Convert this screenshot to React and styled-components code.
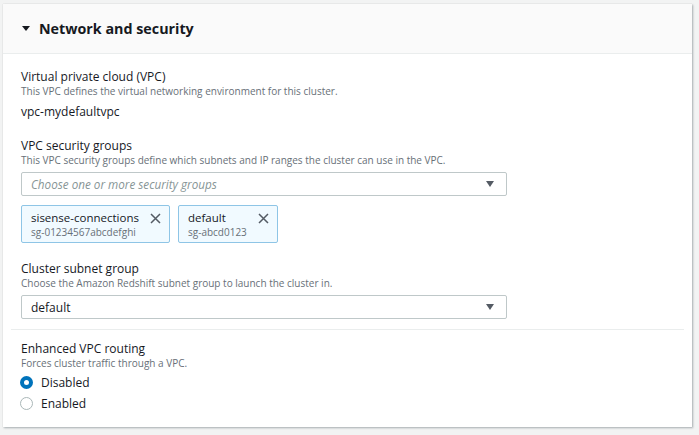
import React from "react";
import styled, { createGlobalStyle } from "styled-components";

const GlobalStyle = createGlobalStyle`
  html, body {
    margin: 0;
    padding: 0;
    background: #f2f3f3;
    font-family: "Open Sans", "Noto Sans", sans-serif;
    color: #16191f;
  }
  * { box-sizing: border-box; }
`;

const Page = styled.div`
  padding: 4px 7px 7px 3px;
`;

const Card = styled.section`
  background: #ffffff;
  box-shadow: 1px 1px 2px rgba(0, 28, 36, 0.3), 0 0 1px rgba(0, 28, 36, 0.15);
`;

const Header = styled.header`
  height: 50px;
  display: flex;
  align-items: center;
  gap: 9px;
  padding-left: 19px;
  background: #fafafa;
  border-bottom: 1px solid #eaeded;
`;

const HeaderTitle = styled.h2`
  margin: 0;
  font-size: 14.3px;
  font-weight: 700;
  line-height: 20px;
  color: #16191f;
`;

const Body = styled.div`
  padding: 15px 8px 13px 8px;
`;

const Section = styled.div`
  padding: 0 10px;
`;

const Field = styled.div`
  margin-top: ${(p) => p.$top || 0}px;
`;

const Label = styled.div`
  font-size: 12px;
  line-height: 16px;
  color: #16191f;
`;

const Description = styled.div`
  font-size: 10px;
  line-height: 12px;
  color: #687078;
`;

const Value = styled.div`
  margin-top: 7px;
  font-size: 12px;
  line-height: 16px;
  color: #16191f;
`;

const Select = styled.div`
  margin-top: 6px;
  width: 486px;
  height: 24px;
  display: flex;
  align-items: center;
  justify-content: space-between;
  padding: 0 12px 0 9px;
  border: 1px solid #bfc8c9;
  border-radius: 2px;
  background: #fff;
`;

const SelectText = styled.span`
  font-size: ${(p) => (p.$placeholder ? "11.7px" : "12px")};
  font-style: ${(p) => (p.$placeholder ? "italic" : "normal")};
  color: ${(p) => (p.$placeholder ? "#879596" : "#16191f")};
`;

const ChipList = styled.div`
  margin-top: 9px;
  display: flex;
  gap: 8px;
`;

const Chip = styled.div`
  height: 38px;
  display: flex;
  align-items: flex-start;
  gap: 11px;
  padding: 4px 8px 4px 9px;
  background: #f1faff;
  border: 1px solid #8ec5e6;
  border-radius: 2px;
`;

const ChipText = styled.div`
  display: flex;
  flex-direction: column;
`;

const ChipTitle = styled.span`
  font-size: 11.5px;
  line-height: 16px;
  color: #16191f;
`;

const ChipSub = styled.span`
  font-size: 10px;
  line-height: 12px;
  color: #687078;
`;

const ChipClose = styled.span`
  display: flex;
  margin-top: 3px;
`;

const Divider = styled.hr`
  margin: 10px 0 0 0;
  border: 0;
  height: 1px;
  background: #eaeded;
`;

const RadioGroup = styled.div`
  margin-top: 3px;
  display: flex;
  flex-direction: column;
`;

const RadioRow = styled.label`
  height: 21px;
  display: flex;
  align-items: center;
  gap: 8px;
  font-size: 12px;
  color: #16191f;
`;

const RadioDot = styled.span`
  width: 13px;
  height: 13px;
  margin-left: -1px;
  border-radius: 50%;
  background: #fff;
  border: ${(p) => (p.$checked ? "4px solid #0073bb" : "1px solid #aab7b8")};
`;

const Caret = ({ color = "#545b64", w = 8, h = 6 }) => (
  <svg width={w} height={h} viewBox="0 0 8 6" preserveAspectRatio="none" aria-hidden="true">
    <path d="M0 0 H8 L4 6 Z" fill={color} />
  </svg>
);

const CloseIcon = () => (
  <svg width="11" height="11" viewBox="0 0 11 11" aria-hidden="true">
    <path d="M1 1 L10 10 M10 1 L1 10" stroke="#545b64" strokeWidth="1.5" fill="none" />
  </svg>
);

const chips = [
  { title: "sisense-connections", sub: "sg-01234567abcdefghi" },
  { title: "default", sub: "sg-abcd0123" },
];

export default function App() {
  return (
    <>
      <GlobalStyle />
      <Page>
        <Card>
          <Header>
            <Caret color="#16191f" w={8} h={5} />
            <HeaderTitle>Network and security</HeaderTitle>
          </Header>
          <Body>
            <Section>
              <Field>
                <Label>Virtual private cloud (VPC)</Label>
                <Description>This VPC defines the virtual networking environment for this cluster.</Description>
                <Value>vpc-mydefaultvpc</Value>
              </Field>
              <Field $top={18}>
                <Label>VPC security groups</Label>
                <Description>
                  This VPC security groups define which subnets and IP ranges the cluster can use in the VPC.
                </Description>
                <Select>
                  <SelectText $placeholder>Choose one or more security groups</SelectText>
                  <Caret />
                </Select>
                <ChipList>
                  {chips.map((c) => (
                    <Chip key={c.sub}>
                      <ChipText>
                        <ChipTitle>{c.title}</ChipTitle>
                        <ChipSub>{c.sub}</ChipSub>
                      </ChipText>
                      <ChipClose>
                        <CloseIcon />
                      </ChipClose>
                    </Chip>
                  ))}
                </ChipList>
              </Field>
              <Field $top={18}>
                <Label>Cluster subnet group</Label>
                <Description>Choose the Amazon Redshift subnet group to launch the cluster in.</Description>
                <Select>
                  <SelectText>default</SelectText>
                  <Caret />
                </Select>
              </Field>
            </Section>
            <Divider />
            <Section>
              <Field $top={11}>
                <Label>Enhanced VPC routing</Label>
                <Description>Forces cluster traffic through a VPC.</Description>
                <RadioGroup>
                  <RadioRow>
                    <RadioDot $checked />
                    Disabled
                  </RadioRow>
                  <RadioRow>
                    <RadioDot />
                    Enabled
                  </RadioRow>
                </RadioGroup>
              </Field>
            </Section>
          </Body>
        </Card>
      </Page>
    </>
  );
}
